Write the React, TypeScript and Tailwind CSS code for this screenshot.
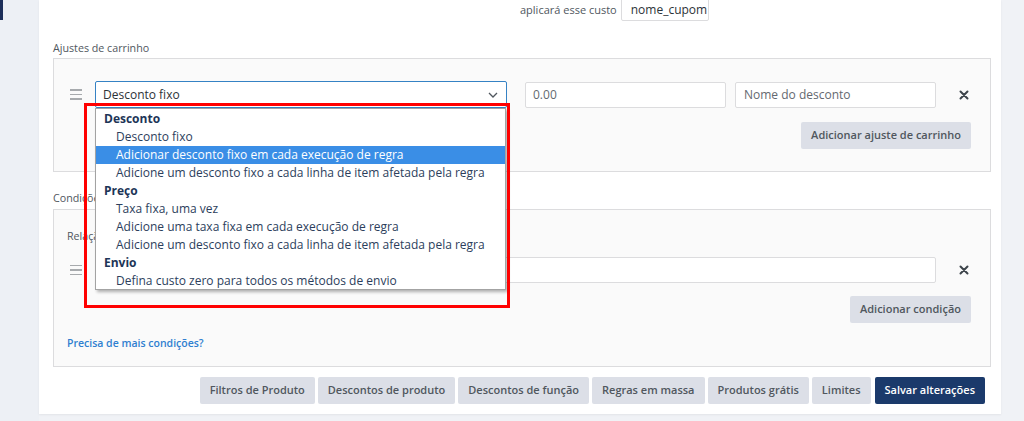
import React from "react";

function Handle() {
  return (
    <div className="w-[12px] flex flex-col gap-[3px] shrink-0">
      <div className="h-[1.5px] bg-[#a7aaad]" />
      <div className="h-[1.5px] bg-[#a7aaad]" />
      <div className="h-[1.5px] bg-[#a7aaad]" />
    </div>
  );
}

function XIcon() {
  return (
    <svg width="10" height="10" viewBox="0 0 10 10" className="shrink-0">
      <path d="M1.5 1.5 L8.5 8.5 M8.5 1.5 L1.5 8.5" stroke="#3c434a" strokeWidth="2" strokeLinecap="round" />
    </svg>
  );
}

function GrayButton({ children }: { children: React.ReactNode }) {
  return (
    <div className="h-[27px] px-[10px] flex items-center bg-[#dcdfe7] rounded-[2px] text-[11px] font-semibold text-[#50575e] whitespace-nowrap">
      {children}
    </div>
  );
}

const groups: { title: string; items: string[] }[] = [
  {
    title: "Desconto",
    items: [
      "Desconto fixo",
      "Adicionar desconto fixo em cada execução de regra",
      "Adicione um desconto fixo a cada linha de item afetada pela regra",
    ],
  },
  {
    title: "Preço",
    items: [
      "Taxa fixa, uma vez",
      "Adicione uma taxa fixa em cada execução de regra",
      "Adicione um desconto fixo a cada linha de item afetada pela regra",
    ],
  },
  {
    title: "Envio",
    items: ["Defina custo zero para todos os métodos de envio"],
  },
];

export default function App() {
  return (
    <div className="w-[1024px] h-[421px] overflow-hidden bg-[#f0f2f6] flex font-['Open_Sans',sans-serif]">
      <div className="w-[39px] shrink-0 bg-[#edf0f5] flex">
        <div className="w-[3px] h-[20px] bg-[#1d2f5a]" />
      </div>
      <div className="w-[962px] h-[414px] shrink-0 bg-white relative pl-[14px] pr-[10px] shadow-[0_1px_2px_rgba(0,0,0,0.06)]">
        {/* top row */}
        <div className="-mt-[5px] h-[26px] flex items-center pl-[467px]">
          <span className="text-[11px] text-[#50575e] leading-[14px] pt-[4px]">aplicará esse custo</span>
          <div className="ml-[4px] w-[88px] h-[26px] border border-[#dcdcde] rounded-[2px] flex items-center pl-[9px] pt-[4px] text-[12px] text-[#2c3338]">
            nome_cupom
          </div>
        </div>

        <div className="mt-[20px] h-[14px] leading-[14px] text-[10.7px] text-[#50575e]">Ajustes de carrinho</div>
        <div className="mt-[3px] h-[114px] border border-[#dcdcde] bg-[#fafafa] pt-[22px]">
          <div className="flex items-center h-[27px] pl-[16px]">
            <Handle />
            <div className="ml-[13px] w-[412px] h-[27px] border border-[#3582c4] rounded-[2px] bg-white flex items-center justify-between pl-[7px] pr-[8px] text-[12px] text-[#2c3338]">
              <span>Desconto fixo</span>
              <svg width="10" height="6" viewBox="0 0 10 6">
                <path d="M1 1 L5 5 L9 1" fill="none" stroke="#50575e" strokeWidth="1.3" />
              </svg>
            </div>
            <div className="ml-[18px] w-[201px] h-[26px] border border-[#dcdcde] rounded-[2px] bg-white flex items-center pl-[7px] text-[12px] text-[#646970]">
              0.00
            </div>
            <div className="ml-[9px] w-[201px] h-[26px] border border-[#dcdcde] rounded-[2px] bg-white flex items-center pl-[8px] text-[12px] text-[#646970]">
              Nome do desconto
            </div>
            <div className="ml-[23px]">
              <XIcon />
            </div>
          </div>
          <div className="mt-[14px] flex justify-end pr-[19px]">
            <GrayButton>Adicionar ajuste de carrinho</GrayButton>
          </div>
        </div>

        <div className="mt-[19px] h-[14px] leading-[14px] text-[10.7px] text-[#50575e]">Condições</div>
        <div className="mt-[4px] h-[158px] border border-[#dcdcde] bg-[#fafafa] pt-[19px]">
          <div className="pl-[13px] h-[14px] leading-[14px] text-[10.7px] text-[#50575e]">Relação</div>
          <div className="mt-[14px] flex items-center h-[26px] pl-[16px]">
            <Handle />
            <div className="ml-[13px] w-[841px] h-[26px] border border-[#dcdcde] rounded-[2px] bg-white" />
            <div className="ml-[23px]">
              <XIcon />
            </div>
          </div>
          <div className="mt-[13px] flex justify-end pr-[19px]">
            <GrayButton>Adicionar condição</GrayButton>
          </div>
          <div className="mt-[13px] pl-[13px] h-[14px] leading-[14px] text-[10.5px] font-semibold text-[#2f7fd0]">
            Precisa de mais condições?
          </div>
        </div>

        <div className="mt-[10px] flex justify-end gap-[3px] pr-[6px]">
          <GrayButton>Filtros de Produto</GrayButton>
          <GrayButton>Descontos de produto</GrayButton>
          <GrayButton>Descontos de função</GrayButton>
          <GrayButton>Regras em massa</GrayButton>
          <GrayButton>Produtos grátis</GrayButton>
          <GrayButton>Limites</GrayButton>
          <div className="ml-[1px] h-[27px] px-[10px] flex items-center bg-[#1b3a6b] rounded-[2px] text-[11px] font-semibold text-white whitespace-nowrap">
            Salvar alterações
          </div>
        </div>

        {/* dropdown list */}
        <div className="absolute left-[56px] top-[108px] w-[411px] h-[182px] pt-[1px] bg-white border border-[#a3a3a3] shadow-[2px_2px_3px_rgba(0,0,0,0.3)] text-[12px]">
          {groups.map((g) => (
            <div key={g.title}>
              <div className="h-[18px] leading-[18px] pl-[8px] font-bold text-[#1d3557]">{g.title}</div>
              {g.items.map((it, i) => {
                const active = g.title === "Desconto" && i === 1;
                return (
                  <div
                    key={i}
                    className={
                      active
                        ? "h-[18px] leading-[18px] pl-[20px] bg-[#3a8ee6] text-white whitespace-nowrap"
                        : "h-[18px] leading-[18px] pl-[20px] text-[#2c3e5c] whitespace-nowrap"
                    }
                  >
                    {it}
                  </div>
                );
              })}
            </div>
          ))}
        </div>
        {/* red highlight frame */}
        <div className="absolute left-[45px] top-[103px] w-[426px] h-[205px] border-[3px] border-[#ff0000] pointer-events-none" />
      </div>
      <div className="flex-1 bg-[#f0f2f6]" />
    </div>
  );
}
